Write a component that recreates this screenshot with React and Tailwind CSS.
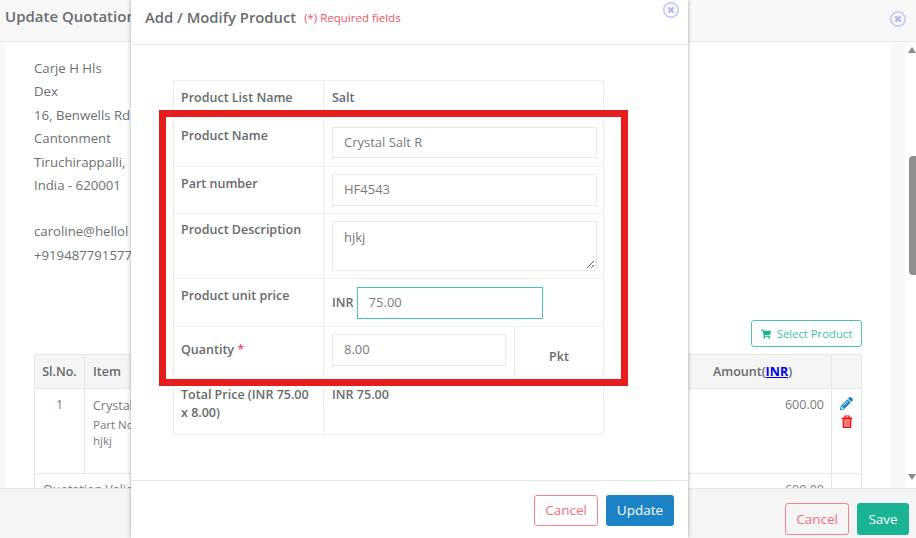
import React from 'react';
import { FaShoppingCart, FaPencilAlt } from 'react-icons/fa';

// ring with a small cross, used for both close buttons
function CloseIcon({ className }) {
  return (
    <svg className={className} width="18" height="18" viewBox="0 0 18 18" fill="none">
      <circle cx="9" cy="9" r="7.2" stroke="#c9c9fb" strokeWidth="1.8" />
      <path d="M6.4 6.4l5.2 5.2M11.6 6.4l-5.2 5.2" stroke="#b9b9e8" strokeWidth="2.4" />
    </svg>
  );
}

function TrashIcon() {
  return (
    <svg className="ml-[1px]" width="12" height="13" viewBox="0 0 12 13" fill="none">
      <path d="M2 3.5h8l-.5 9h-7z" fill="#f07a7a" stroke="#ff0000" strokeWidth="1.2" />
      <path d="M.5 3h11M4 3V1h4v2" stroke="#ff0000" strokeWidth="1.2" />
    </svg>
  );
}

function Background() {
  return (
    <div className="flex h-full flex-col bg-[#f8f8f8]">
      <div className="flex h-[42px] shrink-0 items-center justify-between border-b border-[#e7e7e7] pb-[8px] pl-[5px] pr-[9px]">
        <span className="text-[15px] font-semibold text-[#6a6c6f]">Update Quotation</span>
        <CloseIcon className="mt-[4px]" />
      </div>

      <div className="flex min-h-0 flex-1">
        <div className="min-w-0 flex-1 overflow-hidden pl-[5px]">
          <div className="h-full bg-white pl-[29px] pr-[29px] pt-[15px]">
            <div className="h-[211px] text-[13.2px] font-medium leading-[23.4px] text-[#6b6f75]">
              <div>Carje H Hls</div>
              <div>Dex</div>
              <div>16, Benwells Rd</div>
              <div>Cantonment</div>
              <div>Tiruchirappalli,</div>
              <div>India - 620001</div>
              <div className="h-[23px]" />
              <div>caroline@hellol</div>
              <div>+919487791577</div>
            </div>

            <div className="flex justify-end pb-[7px] pt-[52px]">
              <button className="flex h-[27px] w-[111px] items-center justify-center gap-[6px] rounded-[3px] border border-[#4cc4ab] pt-[1px] text-[11.3px] text-[#3fbfa5]">
                <FaShoppingCart className="text-[10px] text-[#1ab394]" />
                Select Product
              </button>
            </div>

            <div className="border border-[#e7e7e7] text-[12.5px] text-[#777a7f]">
              <div className="flex h-[33px] items-center bg-[#f5f5f5] font-semibold text-[#676a6c]">
                <div className="flex h-full w-[50px] items-center justify-center border-r border-[#e7e7e7] pt-[1px]">Sl.No.</div>
                <div className="flex-1 pl-2 pt-[1px]">Item</div>
                <div className="w-[126px] pl-[8px] pt-[1px]">
                  Amount(<a className="font-bold text-[#0000ee] underline" href="#inr">INR</a>)
                </div>
                <div className="h-full w-[30px] border-l border-[#e7e7e7]" />
              </div>
              <div className="flex h-[85px] border-t border-[#e7e7e7]">
                <div className="w-[50px] border-r border-[#e7e7e7] pt-[7px] text-center">1</div>
                <div className="flex-1 pl-2 pt-[7px]">
                  <div className="leading-[20px]">Crystal Salt R</div>
                  <div className="text-[11.5px] leading-[18px]">Part No : HF4543</div>
                  <div className="text-[11.5px] leading-[13px]">hjkj</div>
                </div>
                <div className="w-[126px] pr-[7px] pt-[7px] text-right">600.00</div>
                <div className="flex w-[30px] flex-col items-center gap-[5px] border-l border-[#e7e7e7] pt-[8px]">
                  <FaPencilAlt className="text-[13px] text-[#1c84c6]" />
                  <TrashIcon />
                </div>
              </div>
              <div className="flex h-[40px] border-t border-[#e7e7e7]">
                <div className="flex-1 pl-2 pt-[7px]">Quotation Validity</div>
                <div className="w-[126px] pr-[7px] pt-[7px] text-right">600.00</div>
                <div className="w-[30px] border-l border-[#e7e7e7]" />
              </div>
            </div>
          </div>
        </div>

        {/* gutter and scrollbar */}
        <div className="w-[14px] shrink-0" />
        <div className="flex w-[11px] shrink-0 flex-col items-end bg-white pt-[5px]">
          <div className="h-0 w-0 border-x-[4px] border-b-[6px] border-x-transparent border-b-[#8a8a8a]" />
          <div className="mt-[103px] h-[119px] w-[7px] rounded-l-[4px] bg-[#8f8f8f]" />
          <div className="mt-[199px] h-0 w-0 border-x-[4px] border-t-[6px] border-x-transparent border-t-[#8a8a8a]" />
        </div>
      </div>

      <div className="flex h-[50px] shrink-0 items-start justify-end gap-[8px] border-t border-[#e7e7e7] bg-[#f5f5f5] pr-[7px] pt-[14px]">
        <button className="h-[32px] w-[64px] rounded-[3px] border border-[#f4848f] text-[13.5px] text-[#f0707c]">Cancel</button>
        <button className="h-[32px] w-[52px] rounded-[3px] bg-[#1ab394] text-[13.5px] font-medium text-white">Save</button>
      </div>
    </div>
  );
}

const labelCell = 'w-[150px] border border-[#eeeeee] pl-[7px] align-top font-semibold text-[#676a6c]';
const valueCell = 'border border-[#eeeeee] pl-2 pr-[6px] align-top';
const inputBox = 'flex items-center border border-[#e9e9e9] bg-white px-[11px] text-[13px] text-[#7a7a7a]';

function ProductModal() {
  return (
    <div className="absolute inset-y-0 left-[131px] flex w-[557px] flex-col bg-white shadow-[0_0_4px_rgba(0,0,0,0.35)]">
      <div className="relative flex h-[45px] shrink-0 items-center gap-2 border-b border-[#e7e7e7] pb-[10px] pl-[14px]">
        <span className="text-[14.8px] font-semibold text-[#6a6c6f]">Add / Modify Product</span>
        <span className="mt-[1px] text-[11.5px] font-medium text-[#ed5565]">(*) Required fields</span>
        <CloseIcon className="absolute right-[8px] top-[1px]" />
      </div>

      <div className="min-h-0 flex-1 pl-[42px] pt-[35px]">
        <table className="w-[431px] table-fixed border-collapse text-[12.5px]">
          <tbody>
            <tr className="h-[34px]">
              <td className={`${labelCell} !align-middle pt-[2px]`}>Product List Name</td>
              <td className={`${valueCell} !align-middle pt-[2px] font-semibold text-[#676a6c]`}>Salt</td>
            </tr>
            <tr className="h-[52px]">
              <td className={`${labelCell} pt-[12px]`}>Product Name</td>
              <td className={`${valueCell} pt-[12px]`}>
                <div className={`${inputBox} h-[31px] w-full`}>Crystal Salt R</div>
              </td>
            </tr>
            <tr className="h-[47px]">
              <td className={`${labelCell} pt-[8px]`}>Part number</td>
              <td className={`${valueCell} pt-[7px]`}>
                <div className={`${inputBox} h-[32px] w-full`}>HF4543</div>
              </td>
            </tr>
            <tr className="h-[65px]">
              <td className={`${labelCell} pt-[7px]`}>Product Description</td>
              <td className={`${valueCell} pt-[7px]`}>
                <div className={`${inputBox} relative h-[50px] w-full !items-start pt-[6px]`}>
                  hjkj
                  <svg className="absolute bottom-[1px] right-[1px]" width="9" height="9" viewBox="0 0 9 9" fill="none" stroke="#666" strokeWidth="1">
                    <path d="M1 8l7-7M5 8l3-3" />
                  </svg>
                </div>
              </td>
            </tr>
            <tr className="h-[48px]">
              <td className={`${labelCell} pt-[8px]`}>Product unit price</td>
              <td className={`${valueCell} pt-[8px]`}>
                <div className="flex items-center gap-[3px]">
                  <span className="font-semibold text-[#676a6c]">INR</span>
                  <div className="flex h-[32px] w-[186px] items-center border border-[#4cc4ab] pl-[11px] text-[13px] text-[#7a7a7a]">75.00</div>
                </div>
              </td>
            </tr>
            <tr className="h-[52px]">
              <td className={`${labelCell} pt-[14px]`}>Quantity <span className="text-[#ed5565]">*</span></td>
              <td className="border border-[#eeeeee] p-0 align-top">
                <div className="flex h-[52px]">
                  <div className="w-[190px] pl-2 pt-[7px]">
                    <div className={`${inputBox} h-[32px] w-[174px]`}>8.00</div>
                  </div>
                  <div className="flex-1 border-l border-[#eeeeee] pt-[21px] text-center font-semibold text-[#676a6c]">Pkt</div>
                </div>
              </td>
            </tr>
            <tr className="h-[55px]">
              <td className={`${labelCell} pr-[12px] pt-[6px] leading-[18px]`}>Total Price (INR 75.00 x 8.00)</td>
              <td className={`${valueCell} pt-[6px] font-semibold leading-[18px] text-[#676a6c]`}>INR 75.00</td>
            </tr>
          </tbody>
        </table>
      </div>

      <div className="flex h-[58px] shrink-0 items-start justify-end gap-[8px] border-t border-[#e7e7e7] pr-[14px] pt-[14px]">
        <button className="h-[31px] w-[64px] rounded-[3px] border border-[#f4848f] text-[13.5px] text-[#f0707c]">Cancel</button>
        <button className="h-[31px] w-[68px] rounded-[3px] bg-[#1c84c6] text-[13.5px] font-medium text-white">Update</button>
      </div>
    </div>
  );
}

export default function App() {
  return (
    <div className="relative h-[538px] w-[916px] overflow-hidden font-['Open_Sans',sans-serif]">
      <Background />
      <ProductModal />
      {/* red annotation drawn on top of the screenshot */}
      <div className="pointer-events-none absolute left-[159px] top-[110px] h-[276px] w-[469px] border-[7px] border-[#e71c1c]" />
    </div>
  );
}
